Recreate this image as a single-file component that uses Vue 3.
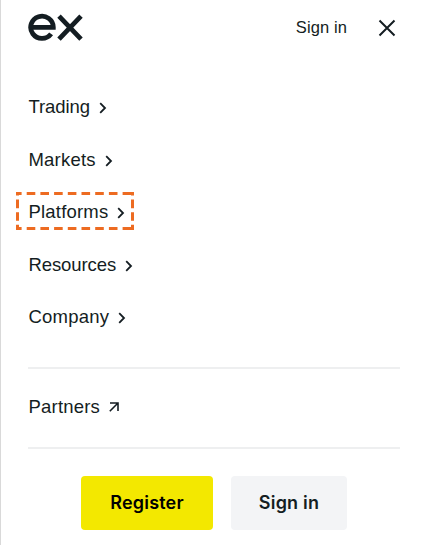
<template>
  <div class="menu">
    <header class="menu__header">
      <svg class="menu__logo" viewBox="0 0 56 30" fill="none" stroke="#141d22" stroke-width="4.8">
        <path d="M2.8 14.4H25.3A11.3 11.1 0 1 0 23.1 20.9" />
        <path d="M31 3.1 53 26.1M53 3.1 31 26.1" />
      </svg>
      <a class="menu__signin" href="#">Sign in</a>
      <button class="menu__close" aria-label="Close">
        <svg viewBox="0 0 18 18" fill="none" stroke="#141d22" stroke-width="2">
          <path d="M1.5 1.5 16.5 16.5M16.5 1.5 1.5 16.5" />
        </svg>
      </button>
    </header>

    <nav class="menu__nav">
      <a v-for="item in items" :key="item.name" class="menu__item" href="#">
        <span class="menu__label" :class="{ 'menu__label--tight': item.tight }">{{ item.name }}</span>
        <svg class="menu__chevron" viewBox="0 0 8 12" fill="none" stroke="#141d22" stroke-width="1.8">
          <path d="M1.2 1.2 6 6 1.2 10.8" />
        </svg>
        <svg v-if="item.highlighted" class="menu__highlight" viewBox="0 0 118 38" fill="none" stroke="#ed6b21" stroke-width="3">
          <path d="M0 1.5H118M0 36.5H118" stroke-dasharray="8.6 5.1" stroke-dashoffset="3" />
          <path d="M1.5 0V38M116.5 0V38" stroke-dasharray="8.6 4" stroke-dashoffset="5" />
        </svg>
      </a>
    </nav>

    <div class="menu__partners">
      <a class="menu__item" href="#">
        <span class="menu__label">Partners</span>
        <svg class="menu__arrow" viewBox="0 0 10 10" fill="none" stroke="#141d22" stroke-width="1.6">
          <path d="M0.8 9.2 9 1M1 1H9V9" />
        </svg>
      </a>
    </div>

    <footer class="menu__footer">
      <button class="btn btn--primary">Register</button>
      <button class="btn btn--secondary">Sign in</button>
    </footer>
  </div>
</template>

<script setup>
const items = [
  { name: 'Trading', tight: true },
  { name: 'Markets' },
  { name: 'Platforms', highlighted: true },
  { name: 'Resources', tight: true },
  { name: 'Company' },
]
</script>

<style>
body {
  background: #fff;
}
</style>

<style scoped>
.menu {
  box-sizing: border-box;
  height: 545px;
  padding: 0 27px;
  border-left: 1px solid #d9d9d9;
  overflow: hidden;
  color: #141d22;
  font-family: "Liberation Sans", Arial, sans-serif;
}

.menu__header {
  display: flex;
  align-items: center;
  height: 56px;
}

.menu__logo {
  width: 56px;
  height: 30px;
}

.menu__signin {
  margin-left: auto;
  font-size: 16.5px;
  letter-spacing: 0.1px;
  line-height: 20px;
  margin-bottom: 3px;
  color: inherit;
  text-decoration: none;
}

.menu__close {
  display: flex;
  margin: 0 4px 0 31px;
  padding: 0;
  border: 0;
  background: none;
}

.menu__close svg {
  width: 18px;
  height: 18px;
}

.menu__nav {
  display: grid;
  grid-auto-rows: 52.5px;
  padding: 25px 0 23.5px;
}

.menu__item {
  position: relative;
  display: flex;
  align-items: center;
  color: inherit;
  font-size: 18.5px;
  text-decoration: none;
}

.menu__label {
  padding-left: 0.5px;
  letter-spacing: 0.2px;
}

.menu__label--tight {
  letter-spacing: -0.1px;
}

.menu__chevron {
  width: 8px;
  height: 12px;
  margin: 2px 0 0 9px;
}

.menu__highlight {
  position: absolute;
  left: -12px;
  top: 6px;
  width: 118px;
  height: 38px;
}

.menu__partners {
  display: flex;
  height: 78px;
  border-top: 2px solid #eeeff0;
  border-bottom: 2px solid #eeeff0;
}

.menu__partners .menu__label {
  margin-bottom: 3px;
}

.menu__arrow {
  width: 10px;
  height: 10px;
  margin: 0 0 2px 9px;
}

.menu__footer {
  display: flex;
  justify-content: center;
  gap: 18px;
  padding-top: 27px;
}

.btn {
  height: 54px;
  padding: 0 0 1px;
  border: 0;
  border-radius: 4px;
  font-family: Inter, "Liberation Sans", sans-serif;
  font-size: 18px;
  font-weight: 600;
  letter-spacing: 0.2px;
}

.btn--primary {
  width: 132px;
  background: #f3e800;
  color: #000;
}

.btn--secondary {
  width: 116px;
  background: #f3f4f6;
  color: #141d22;
}
</style>
